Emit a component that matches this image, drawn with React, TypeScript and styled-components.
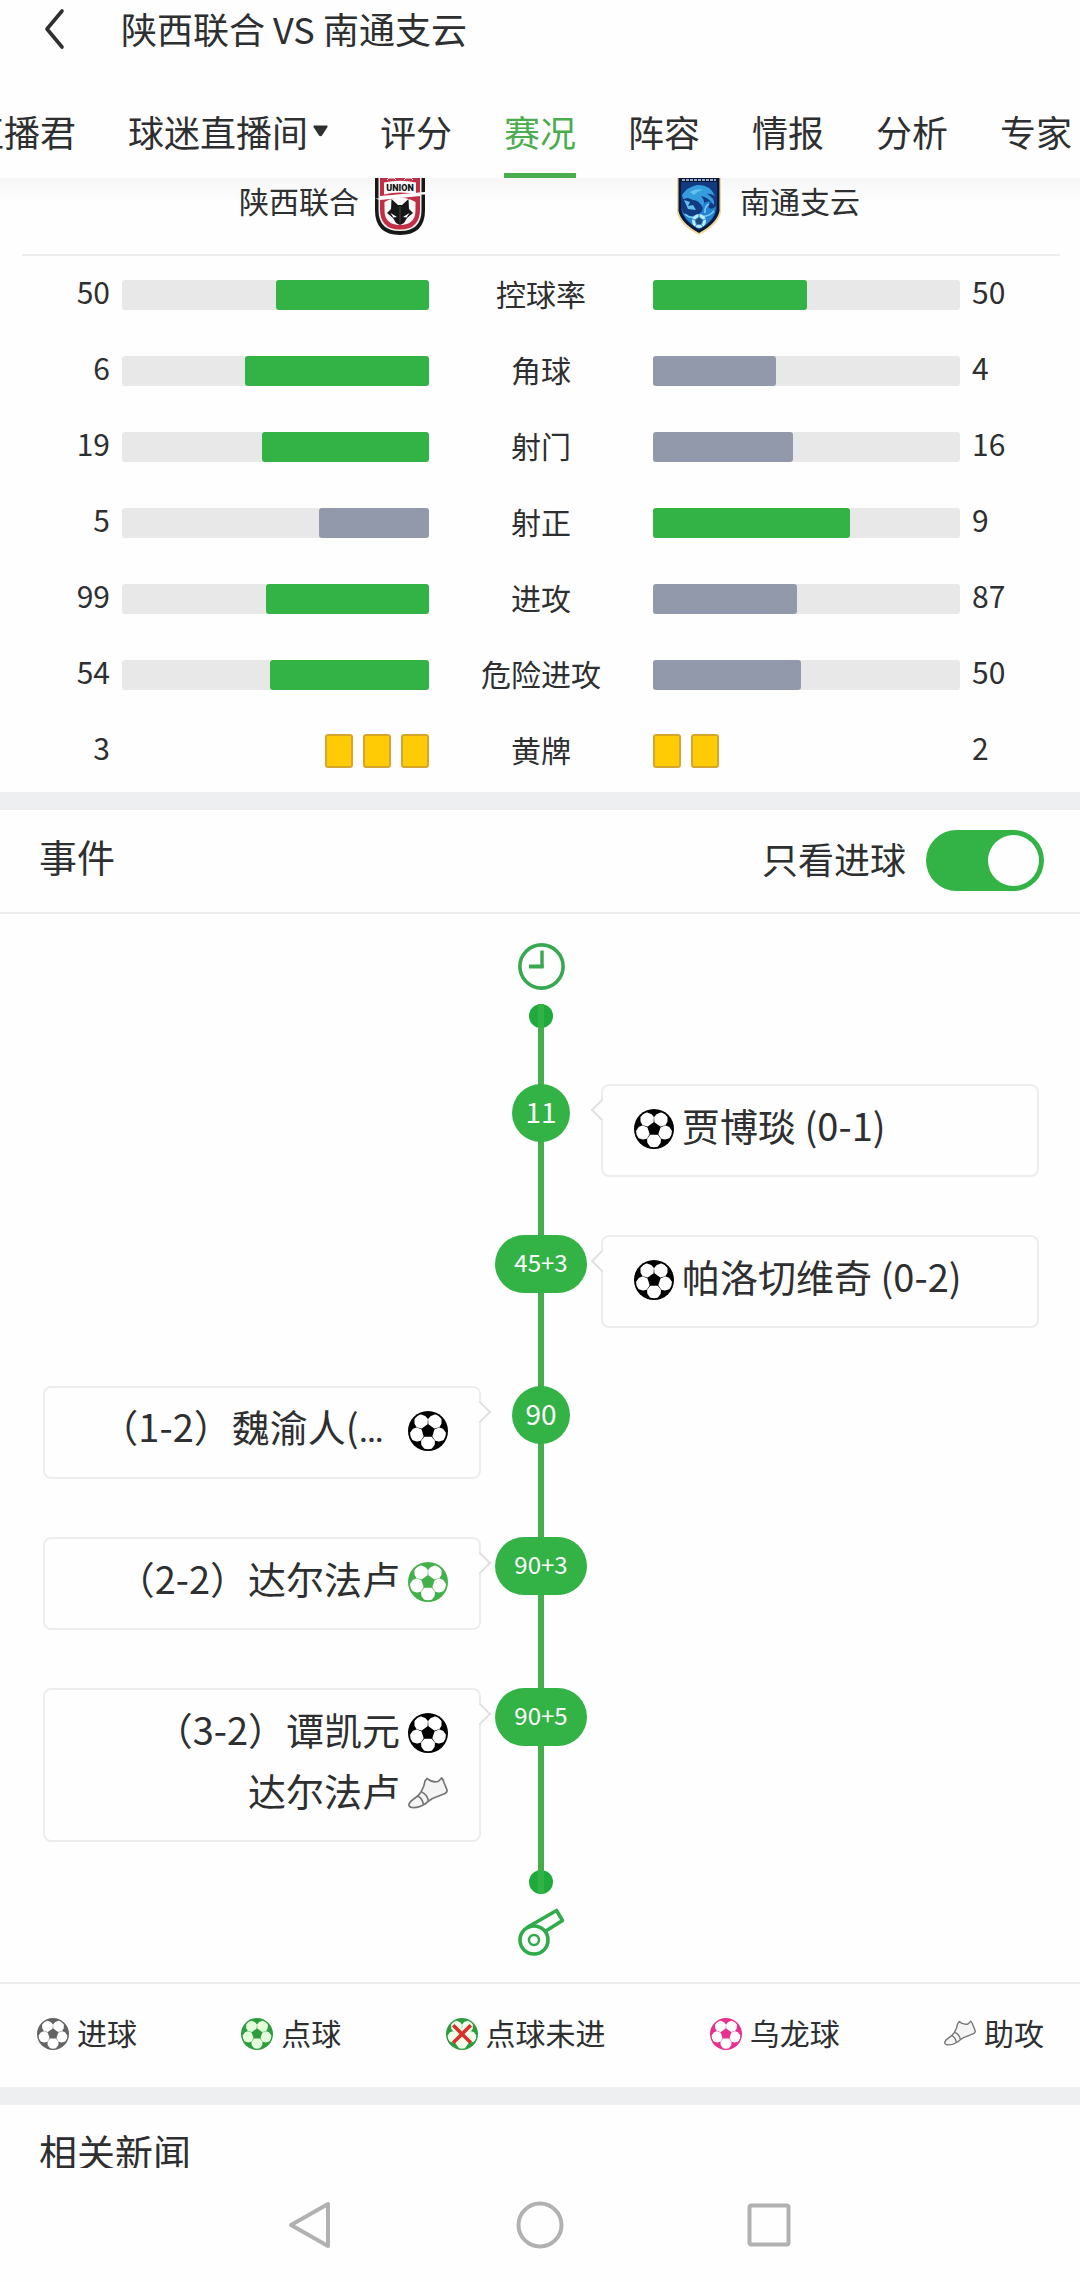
import React, { useState } from "react";
import styled, { createGlobalStyle } from "styled-components";

const GREEN = "#33b345";
const TAB_GREEN = "#4aad4f";
const LINE_GREEN = "#43ae4a";
const SLATE = "#9299ab";
const INK = "#2e2f31";
const RULE = "#eceeee";
const PAPER = "#fefefe";

const GlobalStyle = createGlobalStyle`
  *, *::before, *::after { box-sizing: border-box; }
  body {
    margin: 0;
    background: ${PAPER};
    color: ${INK};
    font-family: "Noto Sans CJK SC", sans-serif;
    overflow-x: hidden;
  }
  button, input {
    margin: 0;
    padding: 0;
    border: 0;
    background: none;
    color: inherit;
    font: inherit;
  }
  svg { display: block; flex: none; }
`;

/* ---------- header ---------- */

const AppBar = styled.header`
  display: flex;
  align-items: center;
  height: 60px;
  padding-left: 40px;
`;

const BackButton = styled.button`
  width: 28px;
  height: 44px;
  margin-right: 53px;
`;

const PageTitle = styled.h1`
  margin: 0;
  padding-bottom: 4px;
  font-size: 36px;
  font-weight: 400;
  line-height: 52px;
`;

const TabBar = styled.nav`
  overflow: hidden;
`;

const TabTrack = styled.div`
  display: flex;
  gap: 52px;
  margin-left: -32px;
`;

const Tab = styled.button<{ $active?: boolean }>`
  display: flex;
  flex: none;
  align-items: center;
  gap: 5px;
  height: 118px;
  padding-top: 29px;
  border-bottom: 5px solid ${(p) => (p.$active ? TAB_GREEN : "transparent")};
  color: ${(p) => (p.$active ? TAB_GREEN : INK)};
  font-size: 36px;
  line-height: 52px;
  white-space: nowrap;
`;

/* ---------- team names ---------- */

const Teams = styled.section`
  display: grid;
  grid-template-columns: 1fr 239px 1fr;
  height: 76px;
  padding-left: 19px;
  background: linear-gradient(#f6f6f6, ${PAPER} 22px);
  overflow: hidden;
`;

const Team = styled.div<{ $home?: boolean }>`
  grid-column: ${(p) => (p.$home ? 1 : 3)};
  display: flex;
  flex-direction: ${(p) => (p.$home ? "row" : "row-reverse")};
  justify-content: flex-end;
  gap: 11px;
  font-size: 30px;
  line-height: 44px;
`;

const Rule = styled.hr<{ $inset?: boolean }>`
  height: 2px;
  margin: 0 ${(p) => (p.$inset ? "20px 0 22px" : "0")};
  border: 0;
  background: ${RULE};
`;

/* ---------- statistics ---------- */

const StatsTable = styled.table`
  width: 100%;
  margin: 1px 0 3px;
  border-collapse: collapse;
  table-layout: fixed;
  font-size: 30px;
  line-height: 40px;

  tr { height: 76px; }
  td, th { padding: 0; vertical-align: middle; font-weight: 400; }
`;

const EdgeCol = styled.col<{ $home?: boolean }>`
  width: ${(p) => (p.$home ? 122 : 120)}px;
`;

const LabelCol = styled.col`
  width: 224px;
`;

const Value = styled.td<{ $home?: boolean }>`
  && {
    padding: 0 12px 8px;
    text-align: ${(p) => (p.$home ? "right" : "left")};
  }
`;

const StatLabel = styled.th`
  && { padding-bottom: 4px; }
`;

const Bar = styled.div<{ $home?: boolean }>`
  display: flex;
  justify-content: ${(p) => (p.$home ? "flex-end" : "flex-start")};
  height: 30px;
  border-radius: 3px;
  background: #e8e8e8;
`;

const Fill = styled.div<{ $lead: boolean }>`
  border-radius: 3px;
  background: ${(p) => (p.$lead ? GREEN : SLATE)};
`;

const Bookings = styled.div<{ $home?: boolean }>`
  display: flex;
  justify-content: ${(p) => (p.$home ? "flex-end" : "flex-start")};
  gap: 10px;
`;

const YellowCard = styled.span`
  width: 28px;
  height: 34px;
  border: 2px solid #d6a62c;
  border-radius: 3px;
  background: #ffcb05;
`;

const Band = styled.div`
  height: 18px;
  background: #eeeff1;
`;

/* ---------- events ---------- */

const EventsHeader = styled.div`
  display: flex;
  align-items: center;
  justify-content: space-between;
  height: 102px;
  padding: 0 36px 2px 39px;
`;

const SectionTitle = styled.h2`
  margin: 0;
  padding-bottom: 8px;
  font-size: 38px;
  font-weight: 400;
  line-height: 56px;
`;

const ToggleLabel = styled.label`
  display: flex;
  align-items: center;
  gap: 20px;
  font-size: 36px;
  line-height: 56px;

  span { padding-bottom: 4px; }
`;

const Toggle = styled.input`
  display: flex;
  align-items: center;
  width: 118px;
  height: 61px;
  padding: 0 5px;
  border-radius: 31px;
  background: #d9d9d9;
  appearance: none;

  &::before {
    content: "";
    width: 51px;
    height: 51px;
    border-radius: 50%;
    background: ${PAPER};
  }

  &:checked {
    justify-content: flex-end;
    background: ${GREEN};
  }
`;

const Timeline = styled.section`
  display: flex;
  flex-direction: column;
  gap: 14px;
  padding: 29px 41px 26px 43px;

  > svg { align-self: center; }
`;

const Track = styled.div`
  display: flex;
  flex-direction: column;
  align-items: center;
  background: linear-gradient(${LINE_GREEN}, ${LINE_GREEN}) center / 6px 100% no-repeat;
`;

const EndDot = styled.span`
  width: 24px;
  height: 24px;
  border-radius: 50%;
  background: linear-gradient(${GREEN}, ${GREEN}) center / 6px 100% no-repeat #1fab3c;
`;

const EventList = styled.ol`
  display: flex;
  flex-direction: column;
  gap: 58px;
  width: 100%;
  margin: 0;
  padding: 56px 0 28px;
  list-style: none;
`;

const EventRow = styled.li`
  display: grid;
  grid-template-columns: minmax(0, 1fr) 120px minmax(0, 1fr);
  align-items: start;
`;

const Minute = styled.span<{ $added: boolean }>`
  grid-column: 2;
  grid-row: 1;
  justify-self: center;
  width: ${(p) => (p.$added ? 92 : 58)}px;
  height: 58px;
  padding-bottom: 2px;
  border-radius: 29px;
  background: ${GREEN};
  color: ${PAPER};
  font-size: ${(p) => (p.$added ? 24 : 28)}px;
  line-height: 54px;
  text-align: center;
`;

const EventCard = styled.div<{ $home: boolean }>`
  position: relative;
  grid-column: ${(p) => (p.$home ? 1 : 3)};
  grid-row: 1;
  padding: 14px 31px;
  border: 2px solid ${RULE};
  border-radius: 8px;
  background: ${PAPER};

  &::after {
    content: "";
    position: absolute;
    top: 16px;
    ${(p) => (p.$home ? "right" : "left")}: -9px;
    width: 16px;
    height: 16px;
    border: solid #dfe1e1;
    border-width: 2px 2px 0 0;
    background: ${PAPER};
    transform: rotate(${(p) => (p.$home ? 45 : 225)}deg);
  }
`;

const EventLine = styled.div<{ $home: boolean }>`
  display: flex;
  flex-direction: ${(p) => (p.$home ? "row-reverse" : "row")};
  align-items: center;
  gap: 8px;
  height: 61px;
  padding-bottom: 4px;
  font-size: 38px;
  line-height: 50px;
  white-space: nowrap;
`;

const EventText = styled.span`
  padding-bottom: 7px;
`;

const Ellipsis = styled.span`
  padding-right: 16px;
  font-family: Roboto, sans-serif;
`;

const Legend = styled.ul`
  display: flex;
  align-items: center;
  justify-content: space-between;
  height: 103px;
  margin: 0;
  padding: 0 36px 4px 37px;
  list-style: none;
  font-size: 30px;
  line-height: 40px;
`;

const LegendItem = styled.li`
  display: flex;
  align-items: center;
  gap: 8px;

  span { padding-bottom: 4px; }
`;

/* ---------- footer ---------- */

const News = styled.section`
  height: 63px;
  padding: 18px 39px 0;
  overflow: hidden;
`;

const SystemNav = styled.nav`
  display: flex;
  align-items: center;
  justify-content: center;
  gap: 181px;
  height: 114px;
`;

const NavButton = styled.button`
  width: 48px;
  height: 48px;
`;

/* ---------- drawings ---------- */

const PATCH = "6.6,-3.2 10,-6 13.4,-5.8 16.8,-3.4 17.4,0 16.8,3.4 13.4,5.8 10,6 6.6,3.2";

function Ball({ size = 40, color = "#000", patch = "#fff", missed = false }: {
  size?: number; color?: string; patch?: string; missed?: boolean;
}) {
  return (
    <svg width={size} height={size} viewBox="-20 -20 40 40" aria-hidden="true">
      <circle r="20" fill={color} />
      {[-126, -54, 18, 90, 162].map((angle) => (
        <polygon
          key={angle}
          points={PATCH}
          transform={`rotate(${angle})`}
          fill={patch}
          stroke={patch}
          strokeWidth="1.8"
          strokeLinejoin="round"
        />
      ))}
      {missed && (
        <>
          <path d="M-10 -10L10 10M10 -10L-10 10" stroke={patch} strokeWidth="10" />
          <path d="M-11 -11L11 11M11 -11L-11 11" stroke="#d9302c" strokeWidth="4.5" />
        </>
      )}
    </svg>
  );
}

function Boot({ size = 40 }: { size?: number }) {
  return (
    <svg width={size} height={size} viewBox="0 -3 40 40" fill="none" stroke="#757575" strokeWidth="1.7" strokeLinejoin="round" aria-hidden="true">
      <path fill="#f4f4f4" d="M19 1.5Q25 6 30 4.5Q31.5 3.5 33.5 1Q35 2 36 5.5L39 13Q39.5 15 37 16.5L24.5 21.5Q21 23.5 17 27Q11 31 4 30.5Q0.5 30 1 27Q2 24.5 5 22.5Q11 18.5 13 15Q16.5 9 17 4Z" />
      <path d="M9.5 19Q14 20.5 15.5 27.5M13.5 15Q19 17 20.5 24" />
    </svg>
  );
}

function Clock() {
  return (
    <svg width="47" height="47" viewBox="0 0 47 47" fill="none" stroke="#37a850" aria-hidden="true">
      <circle cx="23.5" cy="23.5" r="21.6" strokeWidth="3.6" />
      <path d="M24 7.5V25" strokeWidth="3.4" />
      <path d="M11 23.5H25.5" strokeWidth="4" />
    </svg>
  );
}

function Whistle() {
  return (
    <svg width="47" height="48" viewBox="0 0 47 48" fill="none" stroke="#2fab49" aria-hidden="true">
      <circle cx="16" cy="32" r="14" strokeWidth="3.6" />
      <circle cx="16" cy="32" r="5" strokeWidth="2.5" />
      <path d="M9 19.5L38.500 2.5L44.5 12.5L27 23.5" strokeWidth="3.6" strokeLinejoin="round" />
    </svg>
  );
}

function UnionCrest() {
  return (
    <svg width="60" height="60" viewBox="0 0 60 60" aria-hidden="true">
      <path d="M5 -4H55V32Q55 57 30 57Q5 57 5 32Z" fill="#191819" />
      <path d="M8.500 -4H51.5V32Q51.5 53 30 53Q8.5 53 8.5 32Z" fill="#f5eff0" />
      <path d="M10 -4H50V31Q50 51.5 30 51.5Q10 51.5 10 31Z" fill="#c22f45" />
      <path d="M5 20.5H10V18L55 14V16.5L50 16.5V18L10 22Z" fill="#fff" />
      <path d="M14.5 24Q30 15 45.5 24V32Q45.5 47 30 47Q14.5 47 14.5 32Z" fill="#faf8f8" />
      <path d="M14 4.500Q30 1 46 4.5V16.5Q30 12.5 14 16.5Z" fill="#faf8f8" />
      <text x="30" y="13" textAnchor="middle" fontFamily="Roboto, sans-serif" fontSize="9" fontWeight="900" fill="#151515">UNION</text>
      <path d="M17 2L19 0H24L26 2M34 2L36 0H41L43 2" stroke="#fff" strokeWidth="1" fill="none" />
      <path d="M21.5 21L28 27H32L38.5 21L39 31L43 35L37 40L34 45L30 47L26 45L23 40L17 35L21 31Z" fill="#171717" />
      <path d="M20.5 35L27 39L23.5 39.5ZM39.5 35L33 39L36.5 39.5Z" fill="#fff" />
      <path d="M30 28V45" stroke="#484848" strokeWidth="1" />
    </svg>
  );
}

function WolfCrest() {
  return (
    <svg width="60" height="60" viewBox="0 0 60 60" aria-hidden="true">
      <path d="M8 -4H52V34Q50 47 30 57Q10 47 8 34Z" fill="#eed99b" />
      <path d="M9.5 -4H50.5V33Q48 45 30 55Q12 45 9.5 33Z" fill="#0a1738" />
      <path d="M12 4H48V32Q46 43 30 52Q14 43 12 32Z" fill="#123a80" />
      <path d="M13 2H47" stroke="#93a9c6" strokeWidth="2" strokeDasharray="3 1" />
      <path d="M13 17Q18 9 28 7Q41 6 46 18Q41 15 38 16Q46 20 45 27Q39 19 32 18Q37 23 34 30Q30 22 24 22L19 20L14 21Z" fill="#359ddd" />
      <path d="M21 14Q27 10 34 12Q28 13 25 17ZM15 22L21 24L19 28L24 27L27 32L19 31Z" fill="#65c1ef" />
      <path d="M12 30Q16 41 28 37Q35 34 34 27Q36 22 43 24Q38 26 40 30Q44 32 47 28Q47 42 30 51Q14 42 12 30Z" fill="#2384cf" />
      <path d="M16 36Q22 42 30 38Q39 40 45 33M36 35Q35 29 40 26" stroke="#78cdf5" strokeWidth="1.5" fill="none" />
      <circle cx="30" cy="43" r="7" fill="#b7ecf8" />
      <path d="M30 39L34 42L32.5 46.5H27.5L26 42ZM30 36V39M23.5 41L26 42M36.5 41L34 42M26 49L27.5 46.5M34 49L32.5 46.5" fill="#1c4b7d" stroke="#358cbd" strokeWidth="1" />
    </svg>
  );
}

/* ---------- data ---------- */

const TABS = ["直播君", "球迷直播间", "评分", "赛况", "阵容", "情报", "分析", "专家"];

const STATS = [
  { label: "控球率", home: 50, away: 50 },
  { label: "角球", home: 6, away: 4 },
  { label: "射门", home: 19, away: 16 },
  { label: "射正", home: 5, away: 9 },
  { label: "进攻", home: 99, away: 87 },
  { label: "危险进攻", home: 54, away: 50 },
  { label: "黄牌", home: 3, away: 2, cards: true },
];

type Line = { icon: "goal" | "penalty" | "assist"; text: string; cut?: boolean };

const EVENTS: { minute: string; home: boolean; lines: Line[] }[] = [
  { minute: "11", home: false, lines: [{ icon: "goal", text: "贾博琰 (0-1)" }] },
  { minute: "45+3", home: false, lines: [{ icon: "goal", text: "帕洛切维奇 (0-2)" }] },
  { minute: "90", home: true, lines: [{ icon: "goal", text: "（1-2）魏渝人(", cut: true }] },
  { minute: "90+3", home: true, lines: [{ icon: "penalty", text: "（2-2）达尔法卢" }] },
  {
    minute: "90+5",
    home: true,
    lines: [
      { icon: "goal", text: "（3-2）谭凯元" },
      { icon: "assist", text: "达尔法卢" },
    ],
  },
];

function EventIcon({ icon }: { icon: Line["icon"] }) {
  if (icon === "assist") return <Boot />;
  return <Ball color={icon === "penalty" ? "#43b04b" : "#000"} />;
}

function Share({ home, value, total }: { home?: boolean; value: number; total: number }) {
  return (
    <Bar $home={home}>
      <Fill $lead={value * 2 >= total} style={{ width: `${(value / total) * 100}%` }} />
    </Bar>
  );
}

function Cards({ home, count }: { home?: boolean; count: number }) {
  return (
    <Bookings $home={home}>
      {Array.from({ length: count }, (_, i) => <YellowCard key={i} />)}
    </Bookings>
  );
}

export default function App() {
  const [tab, setTab] = useState("赛况");
  const [goalsOnly, setGoalsOnly] = useState(true);

  return (
    <>
      <GlobalStyle />
      <AppBar>
        <BackButton type="button" aria-label="返回">
          <svg width="28" height="44" viewBox="0 0 28 44" fill="none" stroke={INK} strokeWidth="3.6" strokeLinecap="round" strokeLinejoin="round">
            <path d="M22 3L7 21L22 39" />
          </svg>
        </BackButton>
        <PageTitle>陕西联合 VS 南通支云</PageTitle>
      </AppBar>

      <TabBar>
        <TabTrack>
          {TABS.map((name) => (
            <Tab key={name} type="button" $active={name === tab} onClick={() => setTab(name)}>
              {name}
              {name === "球迷直播间" && (
                <svg width="15" height="12" viewBox="0 0 15 12" fill={INK}>
                  <path d="M1 0.5H14Q15 1 14.5 2L9 10.5Q7.5 12 6 10.5L0.5 2Q0 1 1 0.5Z" />
                </svg>
              )}
            </Tab>
          ))}
        </TabTrack>
      </TabBar>

      <main>
        <Teams>
          <Team $home><span>陕西联合</span><UnionCrest /></Team>
          <Team><span>南通支云</span><WolfCrest /></Team>
        </Teams>
        <Rule $inset />

        <StatsTable>
          <colgroup>
            <EdgeCol $home /><col /><LabelCol /><col /><EdgeCol />
          </colgroup>
          <tbody>
            {STATS.map(({ label, home, away, cards }) => (
              <tr key={label}>
                <Value $home>{home}</Value>
                <td>{cards ? <Cards home count={home} /> : <Share home value={home} total={home + away} />}</td>
                <StatLabel scope="row">{label}</StatLabel>
                <td>{cards ? <Cards count={away} /> : <Share value={away} total={home + away} />}</td>
                <Value>{away}</Value>
              </tr>
            ))}
          </tbody>
        </StatsTable>

        <Band />

        <EventsHeader>
          <SectionTitle>事件</SectionTitle>
          <ToggleLabel htmlFor="goals-only">
            <span>只看进球</span>
            <Toggle id="goals-only" type="checkbox" checked={goalsOnly} onChange={(e) => setGoalsOnly(e.target.checked)} />
          </ToggleLabel>
        </EventsHeader>
        <Rule />

        <Timeline>
          <Clock />
          <Track>
            <EndDot />
            <EventList>
              {EVENTS.map(({ minute, home, lines }) => (
                <EventRow key={minute}>
                  <Minute $added={minute.includes("+")}>{minute}</Minute>
                  <EventCard $home={home}>
                    {lines.map(({ icon, text, cut }) => (
                      <EventLine key={text} $home={home}>
                        <EventIcon icon={icon} />
                        <EventText>{text}{cut && <Ellipsis>…</Ellipsis>}</EventText>
                      </EventLine>
                    ))}
                  </EventCard>
                </EventRow>
              ))}
            </EventList>
            <EndDot />
          </Track>
          <Whistle />
        </Timeline>
        <Rule />

        <Legend>
          <LegendItem><Ball size={32} color="#646464" /><span>进球</span></LegendItem>
          <LegendItem><Ball size={32} color="#2c9c3f" patch="#e3ffda" /><span>点球</span></LegendItem>
          <LegendItem><Ball size={32} color="#2c9c3f" patch="#effde9" missed /><span>点球未进</span></LegendItem>
          <LegendItem><Ball size={32} color="#e8308f" /><span>乌龙球</span></LegendItem>
          <LegendItem><Boot size={32} /><span>助攻</span></LegendItem>
        </Legend>

        <Band />

        <News>
          <SectionTitle>相关新闻</SectionTitle>
        </News>
      </main>

      <SystemNav>
        <NavButton type="button" aria-label="后退">
          <svg width="48" height="48" viewBox="0 0 48 48" fill="none" stroke="#b1b1b1" strokeWidth="4" strokeLinejoin="round">
            <path d="M41 3V45L4 24Z" />
          </svg>
        </NavButton>
        <NavButton type="button" aria-label="主屏幕">
          <svg width="48" height="48" viewBox="0 0 48 48" fill="none" stroke="#b1b1b1" strokeWidth="4">
            <circle cx="24" cy="24" r="21.5" />
          </svg>
        </NavButton>
        <NavButton type="button" aria-label="最近任务">
          <svg width="48" height="48" viewBox="0 0 48 48" fill="none" stroke="#b1b1b1" strokeWidth="4">
            <rect x="4.5" y="4.5" width="39" height="39" rx="2" />
          </svg>
        </NavButton>
      </SystemNav>
    </>
  );
}
